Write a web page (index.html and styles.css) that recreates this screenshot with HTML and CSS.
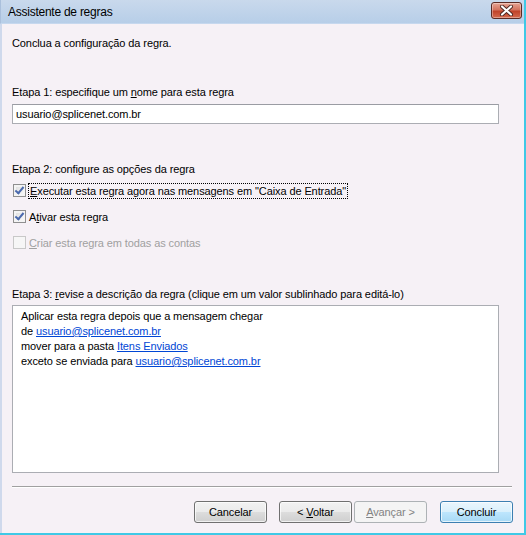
FILE: index.html
```html
<!DOCTYPE html>
<html lang="pt-BR">
<head>
  <meta charset="UTF-8">
  <title>Assistente de regras</title>
  <link rel="stylesheet" href="styles.css">
</head>
<body>
  <div class="window">
    <div class="titlebar">
      <span class="title">Assistente de regras</span>
      <button class="close-btn" type="button" aria-label="Fechar">
        <svg width="15" height="11" viewBox="0 0 15 11">
          <path d="M3 1.5 L12 9.5 M12 1.5 L3 9.5" stroke="#4a2520" stroke-width="4" stroke-linecap="round"/>
          <path d="M3 1.5 L12 9.5 M12 1.5 L3 9.5" stroke="#ffffff" stroke-width="2.2" stroke-linecap="round"/>
        </svg>
      </button>
    </div>

    <div class="content">
      <p class="intro">Conclua a configuração da regra.</p>

      <!-- Etapa 1 -->
      <p class="step step-1">Etapa 1: especifique um <u>n</u>ome para esta regra</p>
      <input class="name-input" type="text" value="usuario@splicenet.com.br">

      <!-- Etapa 2 -->
      <p class="step step-2">Etapa 2: configure as opções da regra</p>
      <label class="check-row first">
        <span class="checkbox checked"></span>
        <span class="focus"><u>E</u>xecutar esta regra agora nas mensagens em "Caixa de Entrada"</span>
      </label>
      <label class="check-row">
        <span class="checkbox checked"></span>
        <span>A<u>t</u>ivar esta regra</span>
      </label>
      <label class="check-row disabled">
        <span class="checkbox"></span>
        <span><u>C</u>riar esta regra em todas as contas</span>
      </label>

      <!-- Etapa 3 -->
      <p class="step step-3">Etapa 3: <u>r</u>evise a descrição da regra (clique em um valor sublinhado para editá-lo)</p>
      <div class="description">
        <div>Aplicar esta regra depois que a mensagem chegar</div>
        <div>de <a href="#">usuario@splicenet.com.br</a></div>
        <div>mover para a pasta <a href="#">Itens Enviados</a></div>
        <div>exceto se enviada para <a href="#">usuario@splicenet.com.br</a></div>
      </div>

      <div class="separator"></div>

      <div class="buttons">
        <button type="button" class="btn">Cancelar</button>
        <button type="button" class="btn back">&lt; <u>V</u>oltar</button>
        <button type="button" class="btn next" disabled><u>A</u>vançar &gt;</button>
        <button type="button" class="btn default">Concluir</button>
      </div>
    </div>
  </div>
</body>
</html>
```

FILE: styles.css
```css
html, body {
  margin: 0;
  padding: 0;
}

body {
  font-family: "Liberation Sans", Arial, sans-serif;
  font-size: 11px;
  letter-spacing: -0.1px;
  color: #000;
  background-color: #f6f1f6;
}

.window {
  width: 526px;
  height: 535px;
  box-sizing: border-box;
  display: flex;
  flex-direction: column;
  border-right: 2px solid #3fc9e6;
  border-bottom: 2px solid #3fc9e6;
}

.titlebar {
  height: 24px;
  flex: none;
  display: flex;
  align-items: center;
  justify-content: space-between;
  padding: 0 2px 0 7px;
  background: linear-gradient(#c9d9ec, #b7cee8);
  border-left: 1px solid #aac0dc;
  border-bottom: 1px solid #c6d8ee;
  box-sizing: border-box;
}

.title {
  font-size: 12px;
  letter-spacing: -0.25px;
  color: #000;
}

.close-btn {
  width: 31px;
  height: 17px;
  margin-top: -3px;
  padding: 0;
  border: 1px solid #5b2a24;
  border-radius: 3px;
  background: linear-gradient(#e7a595 0%, #d3735f 45%, #c0432a 55%, #d46a4f 100%);
  box-shadow: inset 0 0 0 1px rgba(255, 255, 255, 0.35);
  display: flex;
  align-items: center;
  justify-content: center;
}

.close-btn svg {
  display: block;
}

.content {
  flex: 1;
  display: flex;
  flex-direction: column;
  padding: 12px 10px 0 10px;
  border-left: 2px solid #cfd9ec;
  background-color: #f6f1f6;
}

p {
  margin: 0;
  line-height: 14px;
}

.step-1 {
  margin-top: 35px;
}

.name-input {
  margin-top: 5px;
  width: 487px;
  height: 20px;
  box-sizing: border-box;
  border: 1px solid #abadb3;
  border-top-color: #9a9ca3;
  padding: 0 3px;
  font-family: inherit;
  font-size: 11px;
  letter-spacing: -0.1px;
  background: #fff;
  outline: none;
}

.step-2 {
  margin-top: 38px;
}

.check-row {
  display: flex;
  align-items: center;
  height: 15px;
  margin-top: 11px;
  margin-left: 1px;
  gap: 3px;
}

.check-row.first {
  margin-top: 7px;
}

.checkbox {
  width: 13px;
  height: 13px;
  box-sizing: border-box;
  border: 1px solid #8f8f8f;
  background: linear-gradient(135deg, #dcdcdc, #fbfbfb);
  box-shadow: inset 0 0 0 2px #f4f4f4;
  position: relative;
  flex: none;
}

.checkbox.checked::after {
  content: "";
  position: absolute;
  left: 3px;
  top: 0px;
  width: 3px;
  height: 7px;
  border: solid #4a69ad;
  border-width: 0 2px 2px 0;
  transform: rotate(40deg);
}

.focus {
  outline: 1px dotted #000;
  padding: 0 1px;
  line-height: 14px;
}

.check-row.disabled {
  color: #a0a0a0;
}

.check-row.disabled .checkbox {
  border-color: #c8c8c8;
  background: #f6f6f6;
  box-shadow: none;
}

.step-3 {
  margin-top: 37px;
}

.description {
  margin-top: 4px;
  width: 487px;
  height: 168px;
  box-sizing: border-box;
  border: 1px solid #abadb3;
  background: #fff;
  padding: 3px 8px;
  line-height: 15px;
}

.description a {
  color: #0046d5;
  text-decoration: underline;
}

.separator {
  margin-top: 13px;
  width: 500px;
  height: 1px;
  border-top: 1px solid #a0a0a0;
  background: #fff;
}

.buttons {
  margin-top: 13px;
  display: flex;
  justify-content: flex-end;
  width: 501px;
}

.btn {
  width: 73px;
  height: 22px;
  box-sizing: border-box;
  border: 1px solid #707070;
  border-radius: 3px;
  background: linear-gradient(#f2f2f2 0%, #ebebeb 49%, #dddddd 50%, #cfcfcf 100%);
  box-shadow: inset 0 0 0 1px rgba(255, 255, 255, 0.7);
  font-family: inherit;
  font-size: 11px;
  letter-spacing: -0.1px;
  color: #000;
  padding: 0;
}

.btn.back {
  margin-left: 12px;
}

.btn.next {
  margin-left: 2px;
}

.btn:disabled {
  border-color: #adb2b5;
  background: #f4f4f4;
  color: #838383;
  box-shadow: none;
}

.btn.default {
  margin-left: 13px;
  border-color: #3c7fb1;
  background: linear-gradient(#eaf6fd 0%, #d9f0fc 49%, #bee6fd 50%, #a7d9f5 100%);
}
```
